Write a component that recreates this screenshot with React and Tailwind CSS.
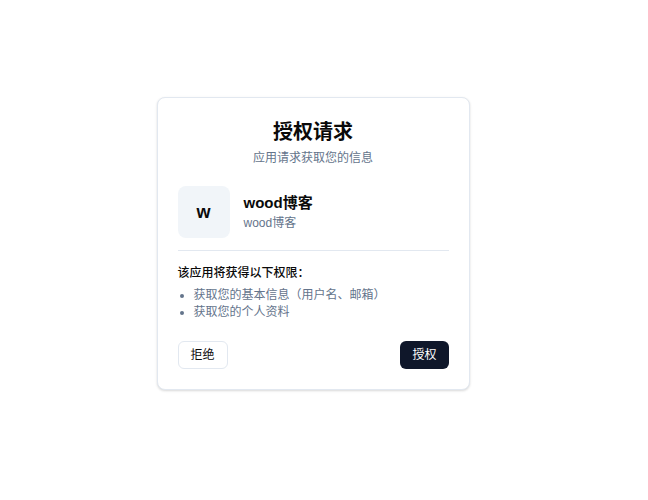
export default function App() {
  return (
    <div
      className="min-h-screen bg-white pr-[22px] pt-[97px] flex justify-center items-start"
      style={{ fontFamily: '"Liberation Sans", "Noto Sans CJK SC", sans-serif' }}
    >
      <div className="w-[313px] rounded-lg border border-[#e2e8f0] bg-white px-5 pt-5 pb-5 shadow-[0_1px_3px_rgba(0,0,0,0.1),0_1px_2px_rgba(0,0,0,0.06)]">
        <div className="text-center">
          <h1 className="text-xl font-bold leading-7 text-[#0a0a0a]">授权请求</h1>
          <p className="mt-1 text-xs leading-4 text-[#64748b]">应用请求获取您的信息</p>
        </div>

        <div className="mt-5 flex items-center gap-3.5">
          <div className="flex h-[52px] w-[52px] items-center justify-center rounded-lg bg-[#f1f5f9] text-lg font-bold text-[#0a0a0a]">
            w
          </div>
          <div>
            <p className="text-[15px] font-bold leading-5 text-[#0a0a0a]">wood博客</p>
            <p className="mt-0.5 text-xs leading-4 text-[#64748b]">wood博客</p>
          </div>
        </div>

        <div className="mt-3 h-px bg-[#e2e8f0]" />

        <div className="mt-3.5">
          <p className="text-xs leading-4 font-medium text-[#0a0a0a]">该应用将获得以下权限：</p>
          <ul className="mt-1.5 list-disc pl-4 text-xs leading-[17px] text-[#64748b] marker:text-[#64748b]">
            <li>获取您的基本信息（用户名、邮箱）</li>
            <li>获取您的个人资料</li>
          </ul>
        </div>

        <div className="mt-5 flex items-center justify-between">
          <button
            type="button"
            className="h-7 rounded-md border border-[#e2e8f0] bg-white px-3 text-xs text-[#0a0a0a]"
          >
            拒绝
          </button>
          <button
            type="button"
            className="h-7 rounded-md bg-[#0f172a] px-3 text-xs text-white"
          >
            授权
          </button>
        </div>
      </div>
    </div>
  )
}
